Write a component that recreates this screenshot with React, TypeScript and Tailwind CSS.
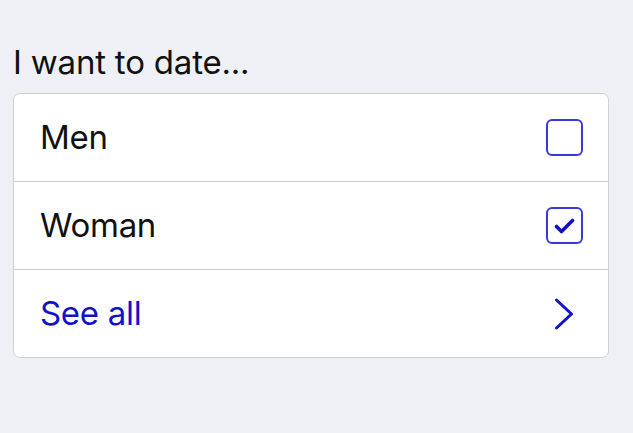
import React, { useState } from 'react';

const options = ['Men', 'Woman'];

const CheckIcon = () => (
  <svg width="24" height="24" viewBox="0 0 24 24" fill="none">
    <path d="M3.5 12.5l5 5 11-11" stroke="#1010c0" strokeWidth="3.6" strokeLinecap="round" strokeLinejoin="round" />
  </svg>
);

const Chevron = () => (
  <svg width="20" height="32" viewBox="0 0 20 32" fill="none">
    <path d="M2.5 2l15 14-15 14" stroke="#1212c6" strokeWidth="3" strokeLinecap="round" strokeLinejoin="round" />
  </svg>
);

export default function App() {
  const [selected, setSelected] = useState<string[]>(['Woman']);

  const toggle = (name: string) => {
    setSelected(prev => (prev.includes(name) ? prev.filter(n => n !== name) : [...prev, name]));
  };

  return (
    <div
      className="w-[633px] h-[433px] bg-[#eff0f5] pt-[41px] px-[13px]"
      style={{ fontFamily: 'Inter, "Liberation Sans", sans-serif' }}
    >
      <h2 className="text-[33px] leading-[42px] text-[#111] mb-[10px] tracking-[-0.2px]">I want to date...</h2>
      <div className="w-[596px] bg-white border border-[#cfcfd4] rounded-[7px] overflow-hidden">
        {options.map(name => {
          const checked = selected.includes(name);
          return (
            <button
              key={name}
              onClick={() => toggle(name)}
              className="w-full h-[88px] flex items-center justify-between pl-[26px] pr-[25px] border-b border-[#cfcfd4] text-left"
            >
              <span className="text-[33px] text-[#111] tracking-[-0.3px]">{name}</span>
              <span className="w-[37px] h-[37px] rounded-[6px] border-2 border-[#3a3ad4] flex items-center justify-center">
                {checked && <CheckIcon />}
              </span>
            </button>
          );
        })}
        <button className="w-full h-[87px] flex items-center justify-between pl-[26px] pr-[34px] text-left">
          <span className="text-[33px] text-[#1212c6] tracking-[-0.3px]">See all</span>
          <Chevron />
        </button>
      </div>
    </div>
  );
}
